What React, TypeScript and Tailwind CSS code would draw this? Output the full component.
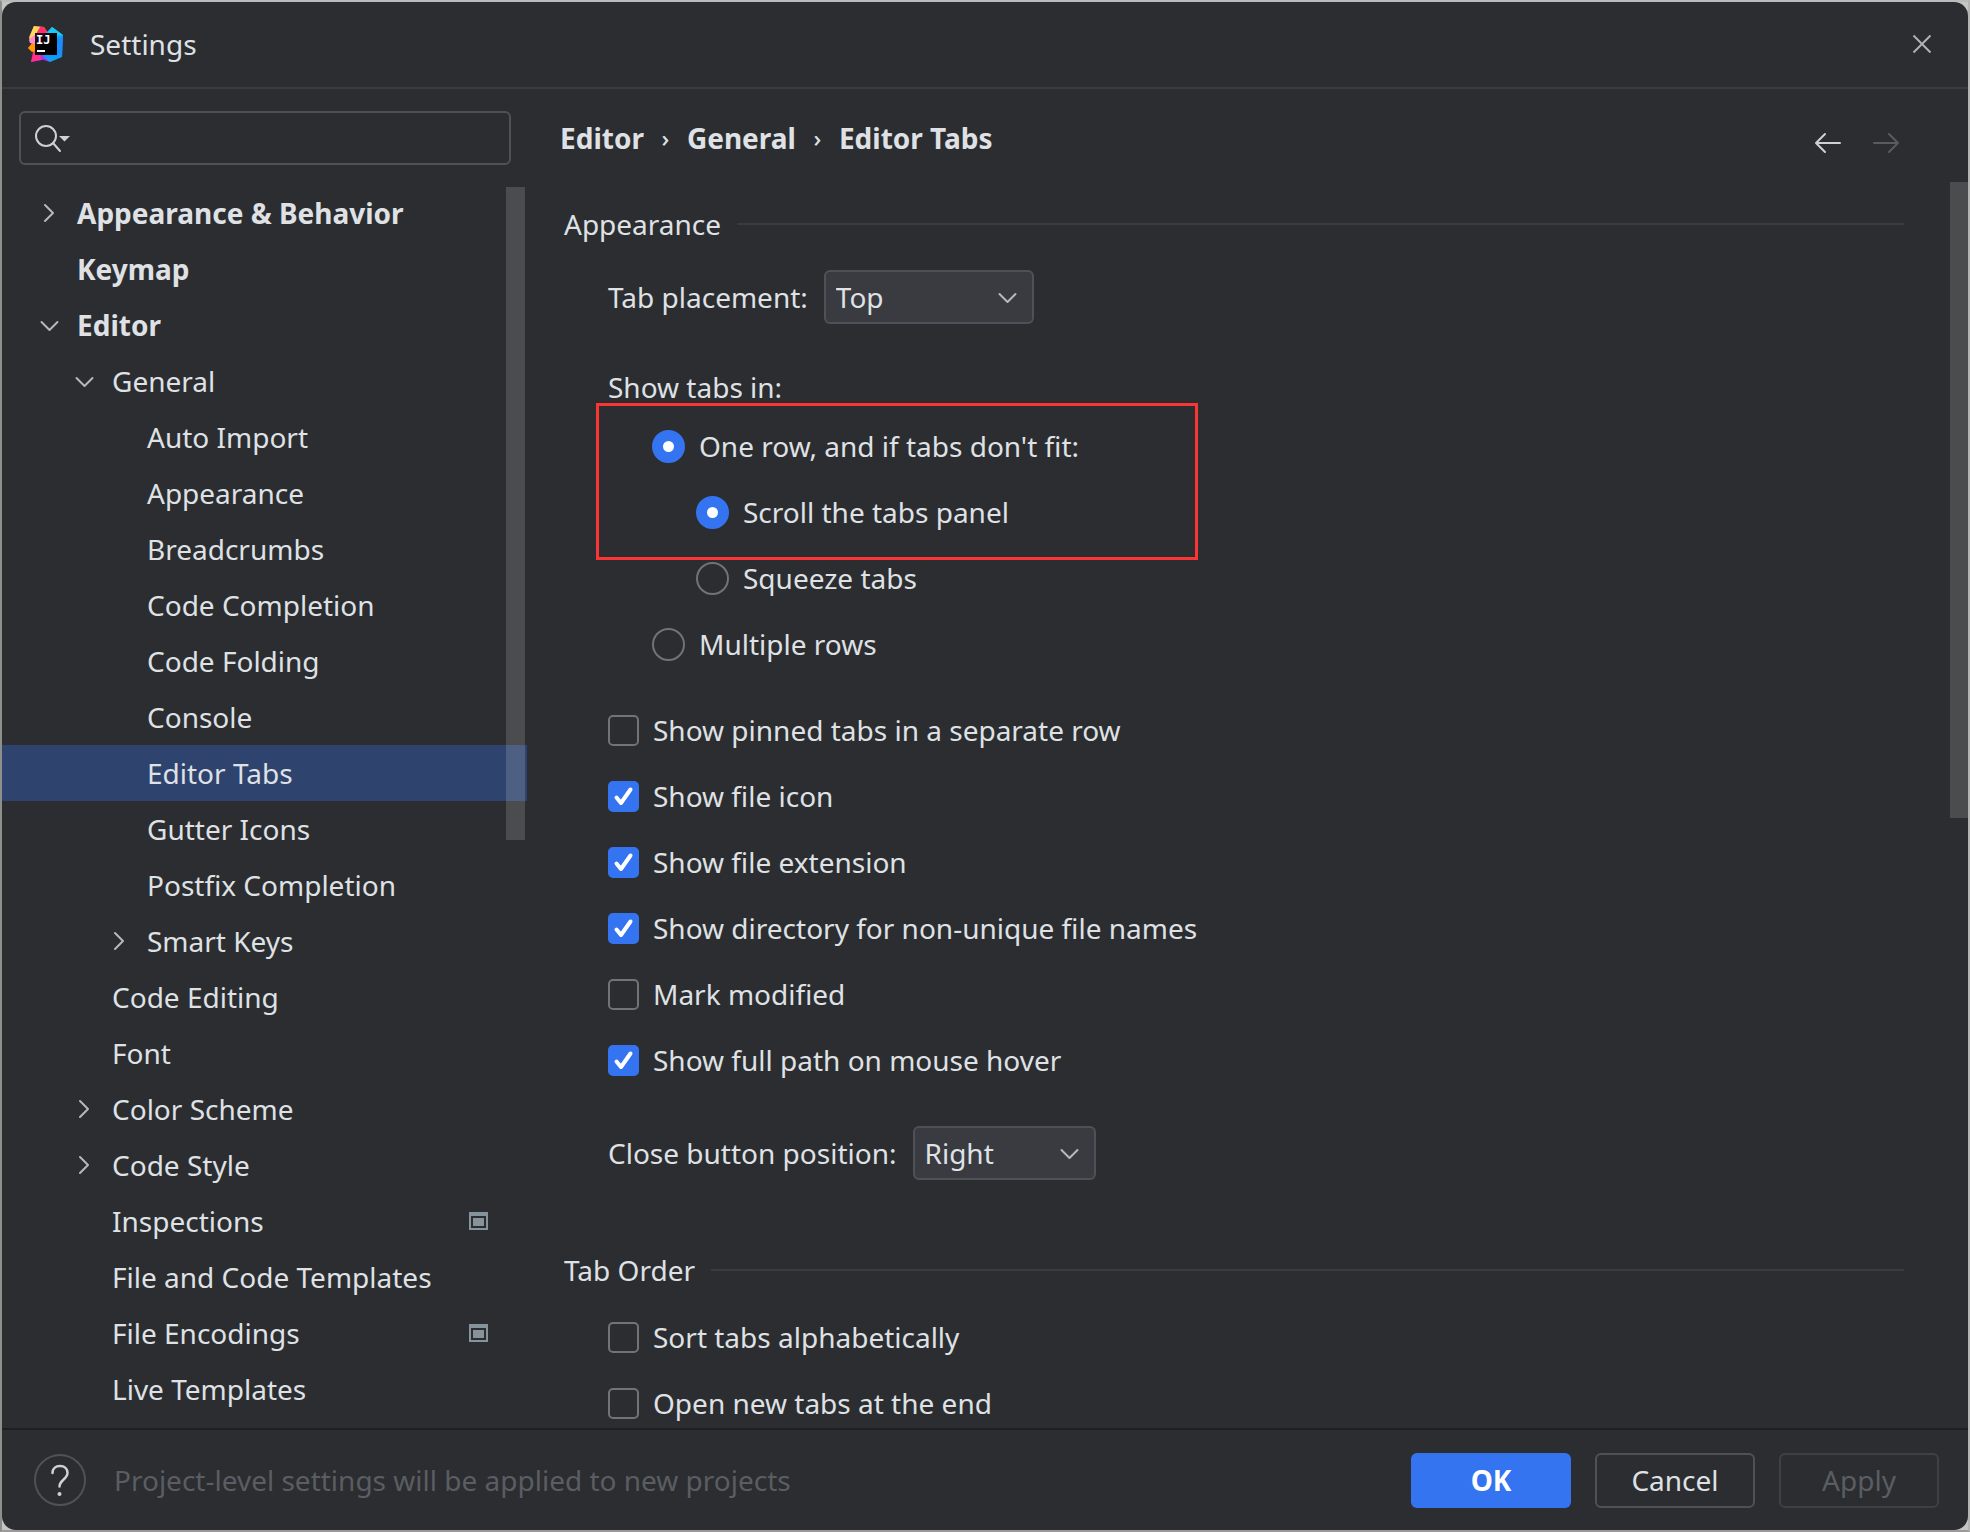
import { useState } from "react";
import type { ReactNode } from "react";

type TreeItem = {
  label: string;
  level: 0 | 1 | 2;
  state?: "open" | "closed";
  project?: boolean;
};

const tree: TreeItem[] = [
  { label: "Appearance & Behavior", level: 0, state: "closed" },
  { label: "Keymap", level: 0 },
  { label: "Editor", level: 0, state: "open" },
  { label: "General", level: 1, state: "open" },
  { label: "Auto Import", level: 2 },
  { label: "Appearance", level: 2 },
  { label: "Breadcrumbs", level: 2 },
  { label: "Code Completion", level: 2 },
  { label: "Code Folding", level: 2 },
  { label: "Console", level: 2 },
  { label: "Editor Tabs", level: 2 },
  { label: "Gutter Icons", level: 2 },
  { label: "Postfix Completion", level: 2 },
  { label: "Smart Keys", level: 2, state: "closed" },
  { label: "Code Editing", level: 1 },
  { label: "Font", level: 1 },
  { label: "Color Scheme", level: 1, state: "closed" },
  { label: "Code Style", level: 1, state: "closed" },
  { label: "Inspections", level: 1, project: true },
  { label: "File and Code Templates", level: 1 },
  { label: "File Encodings", level: 1, project: true },
  { label: "Live Templates", level: 1 },
];

const indent = { 0: "pl-[33px]", 1: "pl-[68px]", 2: "pl-[103px]" };

function ChevronDown() {
  return (
    <svg width="28" height="28" viewBox="0 0 28 28" fill="none" stroke="#b4b8bf" strokeWidth="2" strokeLinecap="round" strokeLinejoin="round" aria-hidden="true">
      <path d="M6.500 11 14.500 19 22.500 11" />
    </svg>
  );
}

function ChevronRight() {
  return (
    <svg width="28" height="28" viewBox="0 0 28 28" fill="none" stroke="#b4b8bf" strokeWidth="2" strokeLinecap="round" strokeLinejoin="round" aria-hidden="true">
      <path d="M10 6 18 14 10 22" />
    </svg>
  );
}

function ProjectIcon() {
  return (
    <svg width="19" height="18" viewBox="0 0 19 18" aria-hidden="true">
      <path fill="#87939a" fillRule="evenodd" d="M0 0H19V18H0ZM2 4V16H17V4Z" />
      <rect x="4" y="6" width="11" height="8" fill="#87939a" />
    </svg>
  );
}

function Logo() {
  return (
    <svg width="36" height="36" viewBox="0 0 36 36" aria-hidden="true">
      <defs>
        <linearGradient id="warm" x1="0" y1="0" x2="0.3" y2="1">
          <stop offset="0" stopColor="#fcee4e" />
          <stop offset="0.3" stopColor="#ff7fb0" />
          <stop offset="0.55" stopColor="#ff8a1e" />
          <stop offset="0.8" stopColor="#ff2d7a" />
          <stop offset="1" stopColor="#e62bd0" />
        </linearGradient>
        <linearGradient id="cool" x1="0" y1="0" x2="0" y2="1">
          <stop offset="0" stopColor="#1fd0ff" />
          <stop offset="0.5" stopColor="#0a7cf5" />
          <stop offset="1" stopColor="#12a6f7" />
        </linearGradient>
        <linearGradient id="core" x1="0" y1="0" x2="1" y2="1">
          <stop offset="0" stopColor="#2c0b22" />
          <stop offset="0.5" stopColor="#000000" />
          <stop offset="1" stopColor="#000000" />
        </linearGradient>
      </defs>
      <path d="M6 0 16 1 22 10 14 34 3 36 5 26 0 22 4 17 1 11Z" fill="url(#warm)" />
      <path d="M6 0 16 1 20 7 10 9Z" fill="#ff2f6a" />
      <path d="M6 0 12 1 8 8 1 14 2 10Z" fill="#ffd75a" />
      <path d="M1 14 8 8 7 18 2 17Z" fill="#ff8ad0" />
      <path d="M0 22 7 17 7 25 4 26Z" fill="#ff9a00" />
      <path d="M3 36 7 27 17 30 13 33Z" fill="#ff3089" />
      <path d="M12 29 20 29 22 36 13 33Z" fill="#a435f0" />
      <path d="M18 7 24 1 35 9 34 31 22 36 15 30Z" fill="url(#cool)" />
      <path d="M24 1 35 9 28 10 20 7Z" fill="#19c8f5" />
      <path d="M35 9 34 31 28 20Z" fill="#1a8cff" />
      <rect x="7" y="7" width="22" height="22" fill="url(#core)" />
      <text x="8" y="18" fill="#ffffff" fontFamily="'DejaVu Sans Mono', monospace" fontWeight="700" fontSize="12">IJ</text>
      <rect x="9" y="24" width="8" height="2" fill="#ffffff" />
    </svg>
  );
}

function Section({ title, children }: { title: string; children: ReactNode }) {
  return (
    <section>
      <h2 className="flex h-10 items-center gap-4">
        {title}
        <span className="h-[2px] flex-1 bg-[#393b40]" />
      </h2>
      <div className="pl-11">{children}</div>
    </section>
  );
}

function Radio({ label, name, checked }: { label: string; name: string; checked?: boolean }) {
  return (
    <label className="flex h-[66px] items-center gap-[14px]">
      <input
        type="radio"
        name={name}
        defaultChecked={checked}
        className="size-[33px] appearance-none rounded-full border-2 border-[#6f737a] checked:border-[11px] checked:border-[#3574f0] checked:bg-white"
      />
      {label}
    </label>
  );
}

function Check({ label, checked }: { label: string; checked?: boolean }) {
  return (
    <label className="flex h-[66px] items-center gap-[14px]">
      <span className="relative flex size-[31px]">
        <input
          type="checkbox"
          defaultChecked={checked}
          className="peer size-[31px] appearance-none rounded-[5px] border-2 border-[#6f737a] checked:border-[#3574f0] checked:bg-[#3574f0]"
        />
        <svg className="pointer-events-none absolute inset-0 hidden peer-checked:block" width="31" height="31" viewBox="0 0 31 31" fill="none" stroke="#ffffff" strokeWidth="4" strokeLinecap="round" strokeLinejoin="round" aria-hidden="true">
          <path d="M8.500 16.500 13 22 22.500 8.500" />
        </svg>
      </span>
      {label}
    </label>
  );
}

function Combo({ id, label, options, width }: { id: string; label: string; options: string[]; width: string }) {
  return (
    <div className="flex items-center gap-4">
      <label htmlFor={id}>{label}</label>
      <span className={"relative flex " + width}>
        <select id={id} className="h-[54px] w-full appearance-none rounded-md border-2 border-[#4e5157] bg-[#393b40] pl-[10px]">
          {options.map((o) => (
            <option key={o}>{o}</option>
          ))}
        </select>
        <span className="pointer-events-none absolute inset-y-0 right-[13px] flex items-center">
          <ChevronDown />
        </span>
      </span>
    </div>
  );
}

export default function App() {
  const [selected, setSelected] = useState("Editor Tabs");

  return (
    <div className="h-screen border-2 border-t-[#b9bcba] border-r-[#b4b4b2] border-b-[#9b999a] border-l-[#8e8e8c] bg-[#c4c6c4] font-['Noto_Sans',sans-serif] text-[28px] leading-10 text-[#dfe1e5]">
      <div className="flex h-full flex-col overflow-hidden rounded-[14px] bg-[#2b2d30]">
        <header className="flex h-[87px] shrink-0 items-center border-b-2 border-[#393b40] pr-[33px] pb-[2px] pl-[26px]">
          <Logo />
          <h1 className="ml-[26px] flex-1">Settings</h1>
          <button type="button" aria-label="Close">
            <svg width="26" height="26" viewBox="0 0 26 26" fill="none" stroke="#b0b1b3" strokeWidth="2" aria-hidden="true">
              <path d="M4.500 4.500 21.500 21.500M21.500 4.500 4.500 21.500" />
            </svg>
          </button>
        </header>

        <div className="flex min-h-0 flex-1">
          <aside className="flex w-[525px] shrink-0 flex-col">
            <div className="relative mt-[22px] mr-4 ml-[17px]">
              <input type="search" aria-label="Search settings" className="block h-[54px] w-full rounded-md border-2 border-[#4e5157] bg-transparent pr-3 pl-14 outline-none" />
              <svg className="pointer-events-none absolute top-[13px] left-[14px]" width="38" height="30" viewBox="0 0 38 30" fill="none" aria-hidden="true">
                <circle cx="13" cy="12" r="10" stroke="#ced0d6" strokeWidth="2" />
                <path d="M20 19 27 27" stroke="#ced0d6" strokeWidth="2" strokeLinecap="round" />
                <path d="M26 12H37L31.500 17.500Z" fill="#ced0d6" />
              </svg>
            </div>
            <nav aria-label="Settings categories" className="relative mt-5 min-h-0 flex-1 overflow-hidden">
              <ul>
                {tree.map((item) => (
                  <li key={item.label}>
                    <button
                      type="button"
                      onClick={() => setSelected(item.label)}
                      className={
                        "flex h-14 w-full items-center pr-[39px] text-left " +
                        indent[item.level] +
                        (item.level === 0 ? " font-bold" : "") +
                        (item.label === selected ? " bg-[#2e436e]" : "")
                      }
                    >
                      <span className="mr-[14px] w-7">
                        {item.state === "open" && <ChevronDown />}
                        {item.state === "closed" && <ChevronRight />}
                      </span>
                      <span className="flex-1">{item.label}</span>
                      {item.project && <ProjectIcon />}
                    </button>
                  </li>
                ))}
              </ul>
              <div className="absolute top-[2px] right-[2px] h-[653px] w-[19px] bg-white/15" />
            </nav>
          </aside>

          <main className="relative flex min-w-0 flex-1 flex-col overflow-hidden">
            <div className="flex items-start pt-[29px] pr-[67px] pl-[33px]">
              <ol className="flex flex-1 font-bold" aria-label="Breadcrumb">
                <li>Editor</li>
                <li aria-hidden="true" className="w-[43px] text-center text-2xl leading-10 font-medium">›</li>
                <li>General</li>
                <li aria-hidden="true" className="w-[43px] text-center text-2xl leading-10 font-medium">›</li>
                <li>Editor Tabs</li>
              </ol>
              <div className="flex gap-7 pt-[10px]">
                <button type="button" aria-label="Back">
                  <svg width="30" height="30" viewBox="0 0 30 30" fill="none" stroke="#ced0d6" strokeWidth="2" strokeLinecap="round" strokeLinejoin="round" aria-hidden="true">
                    <path d="M27 15H3M12 6 3 15 12 24" />
                  </svg>
                </button>
                <button type="button" aria-label="Forward" disabled>
                  <svg width="30" height="30" viewBox="0 0 30 30" fill="none" stroke="#5a5b5d" strokeWidth="2" strokeLinecap="round" strokeLinejoin="round" aria-hidden="true">
                    <path d="M3 15H27M18 6 27 15 18 24" />
                  </svg>
                </button>
              </div>
            </div>

            <div className="mt-[46px] pr-16 pl-[37px]">
              <Section title="Appearance">
                <div className="pt-[26px]">
                  <Combo id="placement" label="Tab placement:" options={["Top", "Bottom", "Left", "Right", "None"]} width="w-[210px]" />
                </div>
                <fieldset className="pt-[43px]">
                  <legend className="float-left w-full">Show tabs in:</legend>
                  <div className="clear-both pt-[6px] pl-11">
                    <div className="relative">
                      <Radio name="rows" label="One row, and if tabs don't fit:" checked />
                      <div className="pl-11">
                        <Radio name="overflow" label="Scroll the tabs panel" checked />
                      </div>
                      <div className="pointer-events-none absolute -top-[10px] -left-14 h-[157px] w-[602px] border-[3px] border-[#fb3434]" />
                    </div>
                    <div className="pl-11">
                      <Radio name="overflow" label="Squeeze tabs" />
                    </div>
                    <Radio name="rows" label="Multiple rows" />
                  </div>
                </fieldset>
                <div className="pt-5">
                  <Check label="Show pinned tabs in a separate row" />
                  <Check label="Show file icon" checked />
                  <Check label="Show file extension" checked />
                  <Check label="Show directory for non-unique file names" checked />
                  <Check label="Mark modified" />
                  <Check label="Show full path on mouse hover" checked />
                </div>
                <div className="pt-[33px] pb-[70px]">
                  <Combo id="close-position" label="Close button position:" options={["Right", "Left", "None"]} width="w-[183px]" />
                </div>
              </Section>
              <Section title="Tab Order">
                <div className="pt-[14px]">
                  <Check label="Sort tabs alphabetically" />
                  <Check label="Open new tabs at the end" />
                </div>
              </Section>
            </div>
            <div className="absolute top-[93px] right-0 h-[636px] w-[18px] bg-white/15" />
          </main>
        </div>

        <footer className="flex h-[102px] shrink-0 items-center border-t-2 border-[#1e1f22] pr-[29px] pl-8">
          <button type="button" aria-label="Help" className="flex size-[52px] items-center justify-center rounded-full border-2 border-[#4e5157]">
            <svg width="20" height="34" viewBox="0 0 20 34" fill="none" aria-hidden="true">
              <path d="M2.500 10C2.500 5.500 5.500 3 10 3S17.500 6 17.500 10C17.500 16 9.500 17 9.500 23.500" stroke="#ced0d6" strokeWidth="2.500" strokeLinecap="round" />
              <circle cx="9.500" cy="31" r="2" fill="#ced0d6" />
            </svg>
          </button>
          <p className="ml-[28px] flex-1 text-[#5a5d63]">Project-level settings will be applied to new projects</p>
          <div className="flex gap-6">
            <button type="button" className="h-[55px] w-40 rounded-md bg-[#3574f0] font-bold text-white">OK</button>
            <button type="button" className="h-[55px] w-40 rounded-md border-2 border-[#4e5157]">Cancel</button>
            <button type="button" disabled className="h-[55px] w-40 rounded-md border-2 border-[#3e4045] text-[#5a5d63]">Apply</button>
          </div>
        </footer>
      </div>
    </div>
  );
}
